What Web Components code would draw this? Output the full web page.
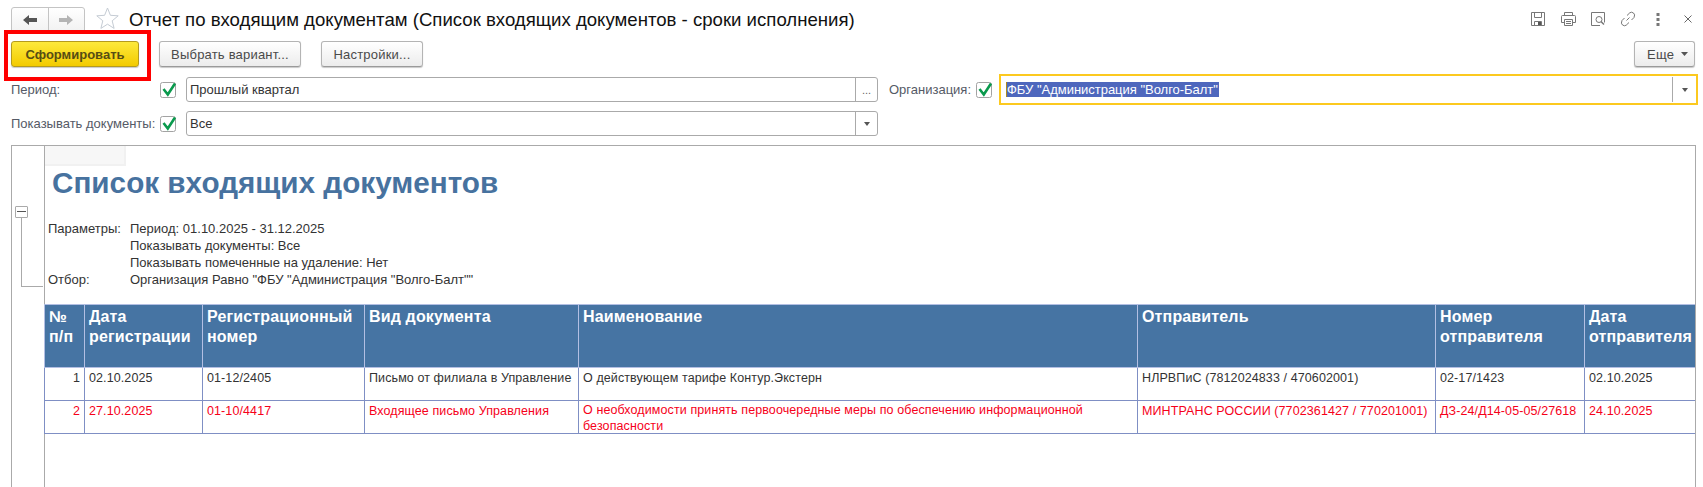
<!DOCTYPE html>
<html lang="ru"><head><meta charset="utf-8"><title>Отчет</title>
<style>
html,body{margin:0;padding:0;background:#fff;font-family:"Liberation Sans",Arial,sans-serif;overflow:hidden}
body{width:1703px;height:487px}
</style></head>
<body>
<report-app></report-app>
<template id="btn-t"><style>
:host{display:inline-flex;align-items:center;justify-content:center;box-sizing:border-box;height:26px;border:1px solid #b4b4b4;border-bottom-color:#9a9a9a;border-radius:3px;background:linear-gradient(#fff,#ececec);box-shadow:0 1px 1px #c9c9c9;font-size:13px;color:#4a4a4a;letter-spacing:.2px;white-space:nowrap;flex:none}
:host([primary]){background:linear-gradient(#fde93c,#f3cb00);border-color:#b59b1d;color:#574d14;font-weight:700;letter-spacing:0}
</style><slot></slot></template>
<template id="chk-t"><style>
:host{display:block;width:16px;height:16px;flex:none;position:relative;margin-top:-1px}
svg{display:block;overflow:visible}
</style><svg width="16" height="16" viewBox="0 0 16 16"><rect x=".5" y=".5" width="15" height="15" rx="2" fill="#fff" stroke="#a3a3a3"/><path d="M3.500 7 7.800 12.500 15 1.500" fill="none" stroke="#0a9a4d" stroke-width="2.600"/></svg></template>
<template id="fld-t"><style>
:host{display:flex;box-sizing:border-box;height:25px;border:1px solid #aaa;border-radius:3px;background:#fff;font-size:13px;color:#333;flex:none;align-self:flex-start}
.v{flex:1;padding:0 3px;line-height:23px;white-space:nowrap;overflow:hidden}
.b{width:21px;border-left:1px solid #aaa;display:flex;align-items:center;justify-content:center;color:#666;font-size:11px;flex:none}
i{display:block;width:0;height:0;border:3.500px solid transparent;border-top:4px solid #555;border-bottom:0}
</style><div class="v"><slot></slot></div><div class="b"></div></template>
<template id="app-t"><style>
:host{display:block;width:1703px;height:487px;position:relative;overflow:hidden;color:#333}
.head{display:flex;align-items:flex-start;height:38px;box-sizing:border-box;padding:0 11px 0 11px}
.nav{display:flex;box-sizing:border-box;width:74px;height:26px;border:1px solid #c4c4c4;border-radius:3px 3px 0 0;background:linear-gradient(#fff,#f1f1f1);margin-top:7px}
.nav div{flex:1;display:flex;align-items:center;justify-content:center}
.nav div+div{border-left:1px solid #c4c4c4}
.star{margin-left:10px;flex:none;margin-top:6px}
h1{margin:10px 0 0 9px;font-size:18.600px;font-weight:400;color:#111;white-space:nowrap;line-height:20px}
.icons{margin-left:auto;display:flex;align-items:center;margin-top:11px;height:16px}
.icons svg{display:block;flex:none}
.bar{display:flex;height:26px;padding:3px 8px 0 11px}
.bar .sp{margin-left:auto}
.row{display:flex;align-items:center;height:26px;padding-left:11px;font-size:13px;color:#555a66;box-sizing:border-box}
.row1{margin-top:10px}
.row2{margin-top:8px}
.lab{width:149px;flex:none;white-space:nowrap;margin-top:-2px}
.row report-check{margin-right:10px}
.org{margin-left:11px;width:87px;flex:none;white-space:nowrap;margin-top:-2px}
.focus{display:flex;box-sizing:border-box;width:699px;height:31px;border:2px solid #fcc91f;margin:-1px 0 0 7px;background:#fff;align-items:center;color:#333;padding-left:5px;font-size:13px}
.sel{background:#4e67bd;color:#fff;line-height:15px;height:15px;white-space:nowrap;border-left:1px solid #b08a20;letter-spacing:-.02px;width:212px}
.focus u{margin-left:auto;width:1px;height:25px;background:#aaa;display:block}
.focus b{width:23px;display:flex;justify-content:center}
.focus i{display:block;width:0;height:0;border:3.500px solid transparent;border-top:4px solid #555;border-bottom:0}
.red{position:absolute;left:4px;top:30px;width:147px;height:51px;box-sizing:border-box;border:4px solid #f00;pointer-events:none}
.report{position:absolute;left:11px;top:145px;width:1685px;height:342px;box-sizing:border-box;border:solid #aaa;border-width:1px 1px 0 1px;overflow:hidden;display:flex}
.gutter{width:32px;flex:none;border-right:1px solid #aaa;position:relative}
.gutter .box{position:absolute;left:3px;top:60px;width:13px;height:12px;box-sizing:border-box;border:1px solid #aaa;border-radius:1px;background:#fff}
.gutter .box::after{content:"";position:absolute;left:1px;right:1px;top:4px;height:1px;background:#555}
.gutter .ln{position:absolute;left:9px;top:71px;width:22px;height:70px;box-sizing:border-box;border:solid #aaa;border-width:0 0 1px 1px}
.sheet{flex:1;min-width:0;position:relative}
.corner{width:81px;height:20px;background:#f7f7f7;border-right:2px solid #f1f1f1;border-bottom:2px solid #f1f1f1;box-sizing:border-box}
.t{margin:0 0 0 7px;font-size:29.700px;font-weight:700;color:#47729f;line-height:34px;white-space:nowrap}
.params{margin:20px 0 0 3px;display:grid;grid-template-columns:82px auto;font-size:13px;line-height:17px;color:#333;justify-content:start;white-space:nowrap}
</style>
<div class="head">
<div class="nav">
<div><svg width="14" height="10" viewBox="0 0 14 10"><path d="M0 5 6 0V3H14V7H6V10Z" fill="#555"/></svg></div>
<div><svg width="14" height="10" viewBox="0 0 14 10"><path d="M14 5 8 0V3H0V7H8V10Z" fill="#b4b4b4"/></svg></div>
</div>
<svg class="star" width="25" height="24" viewBox="0 0 25 24"><path d="M12.500 2 15.400 9.300 23.200 9.800 17.200 14.800 19.100 22.400 12.500 18.200 5.900 22.400 7.800 14.800 1.800 9.800 9.600 9.300Z" fill="#fff" stroke="#c5ccd4"/></svg>
<h1>Отчет по входящим документам (Список входящих документов - сроки исполнения)</h1>
<div class="icons">
<svg width="16" height="16" viewBox="0 0 16 16"><path d="M1.500 1.500H14.500V14.500H1.500ZM4.500 1.500V6.500H11.500V1.500M4.500 14.500V10.500H11.500V14.500" fill="none" stroke="#777"/><rect x="8" y="11" width="3" height="3" fill="#555"/></svg>
<svg width="17" height="16" viewBox="0 0 17 16" style="margin-left:14px"><path d="M4.500 4.500V1.500H12.500V4.500M4 11.500H1.500V5.500Q1.500 4.500 2.500 4.500H14.500Q15.500 4.500 15.500 5.500V11.500H13M4.500 8.500H12.500V14.500H4.500ZM6 10.500H11M6 12.500H11" fill="none" stroke="#777"/></svg>
<svg width="16" height="16" viewBox="0 0 16 16" style="margin-left:13px"><path d="M14.500 11.500V1.500H1.500V14.500H10" fill="none" stroke="#777"/><circle cx="9" cy="8.500" r="3" fill="none" stroke="#777"/><path d="M11 10.500 14 13.500" stroke="#777" stroke-width="1.500"/></svg>
<svg width="16" height="16" viewBox="0 0 16 16" style="margin-left:14px"><path d="M6.500 9.500 9.500 6.500M7 4.500 9.800 1.800Q11.500.5 13.500 2T14 6.500L11.500 9M9 11.500 6.200 14.200Q4.500 15.500 2.500 14T2 9.500L4.500 7" fill="none" stroke="#777"/></svg>
<svg width="4" height="14" viewBox="0 0 4 14" style="margin-left:20px"><rect x="0.500" y="1" width="3" height="3" fill="#777"/><rect x="0.500" y="6" width="3" height="3" fill="#777"/><rect x="0.500" y="11" width="3" height="3" fill="#777"/></svg>
<svg width="8" height="8" viewBox="0 0 8 8" style="margin-left:24px"><path d="M.5.5 7.500 7.500M7.500.5.5 7.500" stroke="#666"/></svg>
</div>
</div>
<div class="bar">
<report-button primary style="width:128px">Сформировать</report-button>
<report-button style="width:142px;margin-left:20px">Выбрать вариант...</report-button>
<report-button style="width:102px;margin-left:20px">Настройки...</report-button>
<report-button class="sp" style="width:61px;padding-left:6px">Еще&nbsp;<svg width="7" height="4" viewBox="0 0 7 4" style="margin-left:3px"><path d="M0 0H7L3.500 4Z" fill="#555"/></svg></report-button>
</div>
<div class="row row1">
<span class="lab">Период:</span><report-check></report-check>
<report-field style="width:692px" data-btn="dots">Прошлый квартал</report-field>
<span class="org">Организация:</span><report-check style="margin-right:0"></report-check>
<div class="focus"><span class="sel">ФБУ "Администрация "Волго-Балт"</span><u></u><b><i></i></b></div>
</div>
<div class="row row2">
<span class="lab">Показывать документы:</span><report-check></report-check>
<report-field style="width:692px" data-btn="arrow">Все</report-field>
</div>
<div class="red"></div>
<div class="report">
<div class="gutter"><div class="ln"></div><div class="box"></div></div>
<div class="sheet">
<div class="corner"></div>
<div class="t">Список входящих документов</div>
<div class="params">
<span>Параметры:</span><span>Период: 01.10.2025 - 31.12.2025</span>
<span></span><span>Показывать документы: Все</span>
<span></span><span>Показывать помеченные на удаление: Нет</span>
<span>Отбор:</span><span>Организация Равно "ФБУ "Администрация "Волго-Балт""</span>
</div>
<report-table></report-table>
</div>
</div>
</div>
</template>
<template id="tbl-t"><style>
:host{display:block;position:absolute;left:-1px;top:158px;width:1700px}
table{border-collapse:collapse;table-layout:fixed;width:1671px;font-size:12.500px;letter-spacing:.1px}
col.a{width:40px}col.b{width:118px}col.c{width:162px}col.d{width:214px}col.e{width:559px}col.f{width:298px}col.g{width:149px}col.h{width:131px}
th{background:#4674a3;color:#fff;font-size:16px;font-weight:700;text-align:left;vertical-align:top;height:63px;line-height:20px;padding:2px 4px 0;border:1px solid #b3bfe3;box-sizing:border-box;white-space:nowrap;letter-spacing:.15px;overflow:hidden}
td{vertical-align:top;padding:2px 4px 0;border:1px solid #7f8fc4;height:33px;box-sizing:border-box;line-height:16px;color:#333;white-space:nowrap;overflow:hidden}
td.n{text-align:right}
td.w{white-space:normal;line-height:15.700px}
td.w div{height:28px}
tr.red td{color:#f6001a}
</style>
<table>
<colgroup><col class="a"><col class="b"><col class="c"><col class="d"><col class="e"><col class="f"><col class="g"><col class="h"></colgroup>
<thead><tr><th>№<br>п/п</th><th>Дата<br>регистрации</th><th>Регистрационный<br>номер</th><th>Вид документа</th><th>Наименование</th><th>Отправитель</th><th>Номер<br>отправителя</th><th>Дата<br>отправителя</th></tr></thead>
<tbody>
<tr><td class="n">1</td><td>02.10.2025</td><td>01-12/2405</td><td>Письмо от филиала в Управление</td><td>О действующем тарифе Контур.Экстерн</td><td>НЛРВПиС (7812024833 / 470602001)</td><td>02-17/1423</td><td>02.10.2025</td></tr>
<tr class="red"><td class="n">2</td><td>27.10.2025</td><td>01-10/4417</td><td>Входящее письмо Управления</td><td class="w"><div>О необходимости принять первоочередные меры по обеспечению информационной безопасности</div></td><td>МИНТРАНС РОССИИ (7702361427 / 770201001)</td><td>ДЗ-24/Д14-05-05/27618</td><td>24.10.2025</td></tr>
</tbody></table></template>
<script>
function def(name,tid,extra){
  customElements.define(name,class extends HTMLElement{
    constructor(){super();const r=this.attachShadow({mode:'open'});r.appendChild(document.getElementById(tid).content.cloneNode(true));}
    connectedCallback(){if(extra)extra(this);}
  });
}
def('report-button','btn-t');
def('report-check','chk-t');
def('report-field','fld-t',el=>{
  const b=el.shadowRoot.querySelector('.b');
  if(b.childNodes.length)return;
  if(el.dataset.btn==='dots'){b.textContent='...';}
  else{b.appendChild(document.createElement('i'));}
});
def('report-table','tbl-t');
def('report-app','app-t');
</script>
</body></html>
